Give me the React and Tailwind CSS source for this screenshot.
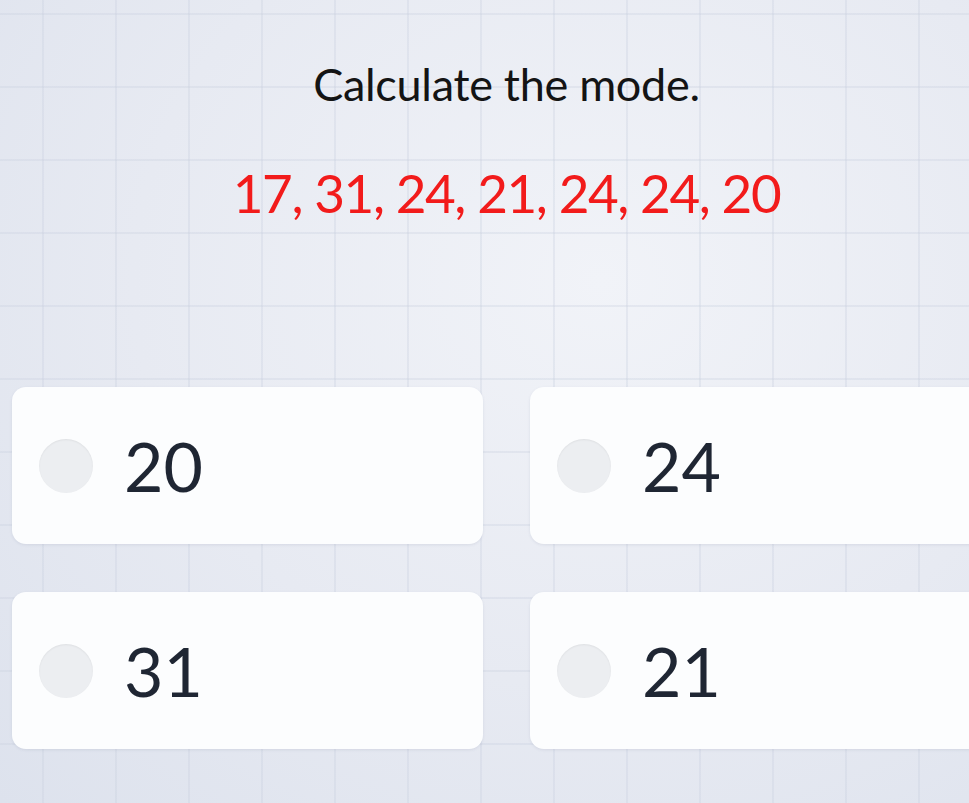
import React from "react";

const options = ["20", "24", "31", "21"];

const Option = ({ label }) => {
  return (
    <button type="button" className="flex h-[157px] items-center gap-[31px] rounded-[14px] bg-[#fcfdfe] pl-[27px] text-left shadow-[0_1px_3px_rgba(90,100,130,0.12)]">
      <span className="h-[54px] w-[54px] shrink-0 rounded-full bg-[#eceef1] shadow-[inset_0_1px_2px_rgba(0,0,0,0.06)]" />
      <span className="text-[68px] leading-none text-[#1f2633]" style={{ fontFamily: "Lato, 'Liberation Sans', sans-serif" }}>{label}</span>
    </button>
  );
};

const App = () => {
  return (
    <div className="h-[803px] w-full overflow-hidden bg-[#e7eaf2] bg-[linear-gradient(to_right,rgba(200,207,222,0.32)_2px,transparent_2px),linear-gradient(to_bottom,rgba(200,207,222,0.32)_2px,transparent_2px),radial-gradient(ellipse_at_62%_35%,#f1f3f8_0%,#e7eaf2_55%,#dde2ed_100%)] bg-[size:73px_73px,73px_73px,100%_100%] bg-[position:42px_13px,42px_13px,0_0]">
      <div className="ml-[12px] flex w-[989px] flex-col items-center" style={{ fontFamily: "Lato, 'Liberation Sans', sans-serif" }}>
        <h1 className="mt-[62px] text-[45px] leading-none tracking-[-0.3px] text-[#141414]">Calculate the mode.</h1>
        <p className="mt-[59px] text-[53px] leading-none tracking-[-1.4px] text-[#f21b1b]">17, 31, 24, 21, 24, 24, 20</p>
        <div className="mt-[168px] grid w-full grid-cols-2 gap-x-[47px] gap-y-[48px]">
          {options.map((o) => (
            <Option key={o} label={o} />
          ))}
        </div>
      </div>
    </div>
  );
};

export default App;
